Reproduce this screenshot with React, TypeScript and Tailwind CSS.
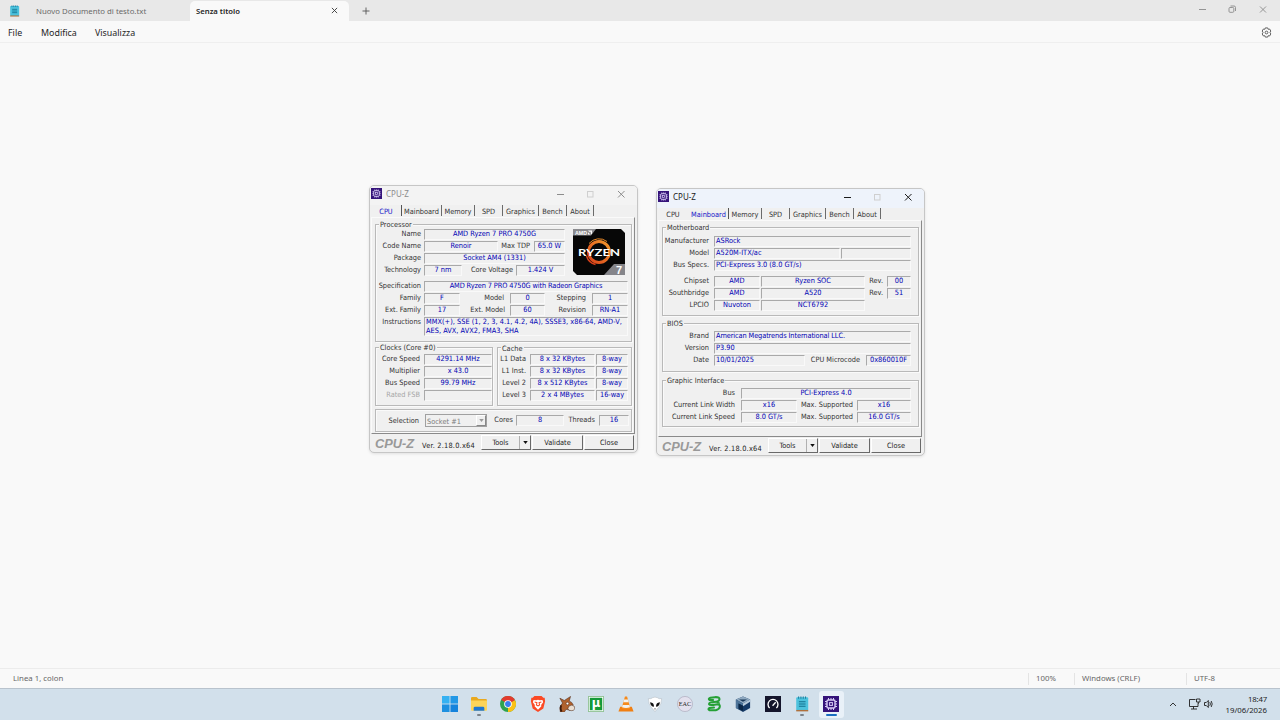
import React from 'react';

const Label: React.FC<{ w: string; children: React.ReactNode; dim?: boolean }> = ({ w, children, dim }) => (
  <span className={`shrink-0 text-right leading-[10px] ${w} ${dim ? 'text-[#a6a6a6]' : 'text-[#333]'}`}>{children}</span>
);

const Field: React.FC<{ className: string; children?: React.ReactNode; left?: boolean }> = ({ className, children, left }) => (
  <span
    className={`h-[11px] shrink-0 border-t border-l border-r border-b border-t-[#a9a9a9] border-l-[#a9a9a9] border-r-[#f9f9f9] border-b-[#f9f9f9] text-[#0000b4] leading-[8px] ${left ? 'text-left pl-px' : 'text-center'} ${className}`}
  >
    {children}
  </span>
);

const Row: React.FC<{ children: React.ReactNode; className?: string }> = ({ children, className = '' }) => (
  <div className={`flex h-3 items-start ${className}`}>{children}</div>
);

const Group: React.FC<{ title?: string; className: string; children: React.ReactNode }> = ({ title, className, children }) => (
  <div className={`shrink-0 border border-[#b9b9b9] shadow-[inset_1px_1px_0_#fafafa,1px_1px_0_#fafafa] ${className}`}>
    {title && <div className="-mt-[5px] ml-[3px] h-[10px] w-fit bg-[#f0f0f0] px-px leading-[9px] text-[#333]">{title}</div>}
    {children}
  </div>
);

const ChipIcon: React.FC<{ className: string }> = ({ className }) => (
  <svg viewBox="0 0 16 16" className={className}>
    <rect width="16" height="16" fill="#35137a" />
    <g stroke="#d9cdf5" strokeWidth="1" fill="none">
      <rect x="4" y="4" width="8" height="8" rx="1.2" strokeWidth="1.4" />
      <rect x="6.6" y="6.6" width="2.8" height="2.8" />
      <path d="M5.5 2v2M8 2v2M10.5 2v2M5.5 12v2M8 12v2M10.5 12v2M2 5.5h2M2 8h2M2 10.5h2M12 5.5h2M12 8h2M12 10.5h2" />
    </g>
  </svg>
);

const TABS = [
  { name: 'CPU', width: 'w-[31px]' },
  { name: 'Mainboard', width: 'w-[40px]' },
  { name: 'Memory', width: 'w-[33px]' },
  { name: 'SPD', width: 'w-[28px]' },
  { name: 'Graphics', width: 'w-[36px]' },
  { name: 'Bench', width: 'w-[28px]' },
  { name: 'About', width: 'w-[27px]' },
];

const CpuzWindow: React.FC<{ tab: string; focused?: boolean; className: string; children: React.ReactNode }> = ({
  tab,
  focused,
  className,
  children,
}) => (
  <div
    className={`absolute flex h-[268px] w-[269px] flex-col overflow-hidden rounded-[5px] border border-[#c6c6c6] bg-[#f0f0f0] font-['DejaVu_Sans_Condensed','DejaVu_Sans',sans-serif] text-[7.33px] whitespace-nowrap shadow-[0_1px_3px_rgba(0,0,0,0.1)] [font-stretch:condensed] ${className}`}
  >
    <div className={`flex h-[19px] shrink-0 items-center pl-px ${focused ? 'bg-[#eef3fb]' : 'bg-[#f3f3f3]'}`}>
      <ChipIcon className="mb-[5px] size-[11px]" />
      <span className={`mb-[4px] ml-[4px] w-[165px] font-['Noto_Sans',sans-serif] text-[8px] leading-[10px] ${focused ? 'text-[#1b1b1b]' : 'text-[#8c8c8c]'}`}>CPU-Z</span>
      <svg viewBox="0 0 78 10" className={`mb-[4px] ml-[3px] h-[10px] w-[78px] ${focused ? 'text-[#1b1b1b]' : 'text-[#8c8c8c]'}`} fill="none" stroke="currentColor" strokeWidth="1">
        <path d="M3 5.5h7" />
        <rect x="33.5" y="2.5" width="5.5" height="5.5" stroke="#cfcfcf" />
        <path d="M64 2l6.5 6.5M70.500 2L64 8.500" />
      </svg>
    </div>

    <div className="flex h-3 shrink-0 items-start pl-px">
      {TABS.map((t) => (
        <div
          key={t.name}
          className={`h-[11px] border-r text-center leading-[14px] ${t.width} ${
            t.name === tab ? 'border-r-[#555] text-[#1414c8]' : t.name === 'CPU' ? 'border-r-transparent text-[#333]' : 'border-r-[#6b6b6b] text-[#333]'
          }`}
        >
          {t.name}
        </div>
      ))}
    </div>

    <div className="mx-px flex h-[217px] w-[264px] shrink-0 flex-col border border-t-[#fafafa] border-r-[#8a8a8a] border-b-[#8a8a8a] border-l-[#fafafa] pt-[6px] pl-[3px]">
      {children}
    </div>

    <div className="flex h-[18px] items-start text-[#1b1b1b]">
      <span className="ml-[5px] w-[47px] pt-[2px] font-['Liberation_Sans',sans-serif] text-[12.8px] leading-[16px] font-bold text-[#999] italic [font-stretch:normal]">CPU-Z</span>
      <span className="w-[59px] pt-[7px] leading-[10px] tracking-[0.22px]">Ver. 2.18.0.x64</span>
      <div className="mt-px flex h-[15px] w-[50px] border border-t-white border-r-[#696969] border-b-[#696969] border-l-white">
        <span className="w-[37px] text-center leading-[14px]">Tools</span>
        <span className="flex flex-1 items-center justify-center border-l border-l-[#b0b0b0]">
          <svg viewBox="0 0 6 4" className="mb-px h-[3px] w-[5px]"><path d="M0 0h6L3 4z" fill="#111" /></svg>
        </span>
      </div>
      <div className="mt-px ml-px h-[15px] w-[51px] border border-t-white border-r-[#696969] border-b-[#696969] border-l-white text-center leading-[14px]">Validate</div>
      <div className="mt-px ml-px h-[15px] w-[50px] border border-t-white border-r-[#696969] border-b-[#696969] border-l-white text-center leading-[14px]">Close</div>
    </div>
  </div>
);

const RyzenLogo = () => (
  <svg viewBox="0 0 52 46" className="h-[46px] w-[52px]">
    <defs>
      <linearGradient id="ring" x1="0" y1="1" x2="1" y2="0">
        <stop offset="0" stopColor="#d8401a" />
        <stop offset="1" stopColor="#f39a2c" />
      </linearGradient>
    </defs>
    <path d="M0 0h48l4 4v42H4l-4-4z" fill="#070707" />
    <path d="M0 0h23l-5 6.500H0z" fill="#8b8b8f" />
    <path d="M41 35h11v11H31z" fill="#85858a" />
    <circle cx="26" cy="23" r="10.500" fill="none" stroke="url(#ring)" strokeWidth="3" />
    <path d="M16 14.500a13 13 0 0 1 18-2" fill="none" stroke="#ee8b27" strokeWidth="1" />
    <path d="M13.500 27a12.500 12.500 0 0 0 9 8.500" fill="none" stroke="#d8401a" strokeWidth="1.500" />
    <text x="2" y="5.600" fill="#fff" fontSize="5.500" fontWeight="700" fontFamily="Liberation Sans, sans-serif" textLength="12" lengthAdjust="spacingAndGlyphs">AMD</text>
    <path d="M15 1.600h4v4l-1.200-1.200V2.800h-1.600zM15 3.200v2.400h2.400l-1.100-1.100z" fill="#fff" />
    <text x="5" y="27" fill="#fff" fontSize="9.500" fontWeight="700" fontFamily="Lato, sans-serif" textLength="42" lengthAdjust="spacingAndGlyphs">RYZEN</text>
    <text x="43" y="44.500" fill="#fff" fontSize="11" fontWeight="700" fontFamily="Liberation Sans, sans-serif">7</text>
  </svg>
);

const CpuPage = () => (
  <>
    <Group title="Processor" className="h-[118px] w-[257px]">
      <div className="-mt-px flex">
        <div>
          <Row><Label w="w-[45px]">Name</Label><Field className="ml-[3px] w-[141px]">AMD Ryzen 7 PRO 4750G</Field></Row>
          <Row>
            <Label w="w-[45px]">Code Name</Label><Field className="ml-[3px] w-[74px]">Renoir</Field>
            <Label w="w-[32px]">Max TDP</Label><Field className="ml-[4px] w-[31px]">65.0 W</Field>
          </Row>
          <Row><Label w="w-[45px]">Package</Label><Field className="ml-[3px] w-[141px]">Socket AM4 (1331)</Field></Row>
          <Row className="mb-1">
            <Label w="w-[45px]">Technology</Label><Field className="ml-[3px] w-[38px]">7 nm</Field>
            <Label w="w-[51px]">Core Voltage</Label><Field className="ml-[3px] w-[49px]">1.424 V</Field>
          </Row>
        </div>
        <div className="ml-[8px]"><RyzenLogo /></div>
      </div>
      <Row><Label w="w-[45px]">Specification</Label><Field className="ml-[3px] w-[204px] tracking-[-0.12px]">AMD Ryzen 7 PRO 4750G with Radeon Graphics</Field></Row>
      <Row>
        <Label w="w-[45px]">Family</Label><Field className="ml-[3px] w-[36px]">F</Field>
        <Label w="w-[44px]">Model</Label><Field className="ml-[6px] w-[35px]">0</Field>
        <Label w="w-[41px]">Stepping</Label><Field className="ml-[6px] w-[36px]">1</Field>
      </Row>
      <Row>
        <Label w="w-[45px]">Ext. Family</Label><Field className="ml-[3px] w-[36px]">17</Field>
        <Label w="w-[45px]">Ext. Model</Label><Field className="ml-[5px] w-[35px]">60</Field>
        <Label w="w-[41px]">Revision</Label><Field className="ml-[6px] w-[36px]">RN-A1</Field>
      </Row>
      <div className="flex items-start">
        <Label w="w-[45px]">Instructions</Label>
        <div className="ml-[3px] h-[19px] w-[204px] border border-t-[#a9a9a9] border-r-[#f9f9f9] border-b-[#f9f9f9] border-l-[#a9a9a9] pl-px leading-[8.500px] tracking-[0.03px] text-[#0000b4]">
          MMX(+), SSE (1, 2, 3, 4.1, 4.2, 4A), SSSE3, x86-64, AMD-V,<br />AES, AVX, AVX2, FMA3, SHA
        </div>
      </div>
    </Group>

    <div className="mt-[5px] flex gap-[4px]">
      <Group title="Clocks (Core #0)" className="h-[59px] w-[118px]">
        <Row className="mt-px"><Label w="w-[44px]">Core Speed</Label><Field className="ml-[4px] w-[68px]">4291.14 MHz</Field></Row>
        <Row><Label w="w-[44px]">Multiplier</Label><Field className="ml-[4px] w-[68px]">x 43.0</Field></Row>
        <Row><Label w="w-[44px]">Bus Speed</Label><Field className="ml-[4px] w-[68px]">99.79 MHz</Field></Row>
        <Row><Label w="w-[44px]" dim>Rated FSB</Label><Field className="ml-[4px] w-[68px]" /></Row>
      </Group>
      <Group title="Cache" className="h-[59px] w-[135px] pt-px">
        {[
          ['L1 Data', '8 x 32 KBytes', '8-way'],
          ['L1 Inst.', '8 x 32 KBytes', '8-way'],
          ['Level 2', '8 x 512 KBytes', '8-way'],
          ['Level 3', '2 x 4 MBytes', '16-way'],
        ].map(([name, size, way]) => (
          <Row key={name}>
            <Label w="w-[28px]">{name}</Label>
            <Field className="ml-[4px] w-[65px]">{size}</Field>
            <Field className="ml-px w-[32px]">{way}</Field>
          </Row>
        ))}
      </Group>
    </div>

    <Group className="mt-[3px] flex h-[23px] w-[257px] items-start pt-[5px]">
      <Label w="w-[43px]"><span className="leading-[12px]">Selection</span></Label>
      <div className="-mt-px ml-[6px] flex h-[13px] w-[62px] justify-between border border-[#a0a0a0] pl-px leading-[13px] text-[#7c7c7c]">
        Socket #1
        <span className="flex w-[10px] items-center justify-center border-t border-r border-b border-l border-t-white border-r-[#888] border-b-[#888] border-l-white">
          <svg viewBox="0 0 6 4" className="h-[3px] w-[5px]"><path d="M0 0h6L3 4z" fill="#999" /></svg>
        </span>
      </div>
      <Label w="w-[26px]">Cores</Label><Field className="ml-[3px] w-[48px]">8</Field>
      <Label w="w-[31px]">Threads</Label><Field className="ml-[4px] w-[30px]">16</Field>
    </Group>
  </>
);

const MainboardPage = () => (
  <>
    <Group title="Motherboard" className="h-[89px] w-[257px]">
      <Row className="mt-[3px]"><Label w="w-[46px]">Manufacturer</Label><Field left className="ml-[5px] w-[197px]">ASRock</Field></Row>
      <Row>
        <Label w="w-[46px]">Model</Label><Field left className="ml-[5px] w-[126px]">A520M-ITX/ac</Field>
        <Field className="ml-px w-[70px]" />
      </Row>
      <Row className="mb-1"><Label w="w-[46px]">Bus Specs.</Label><Field left className="ml-[5px] w-[197px]">PCI-Express 3.0 (8.0 GT/s)</Field></Row>
      {[
        ['Chipset', 'AMD', 'Ryzen SOC', '00'],
        ['Southbridge', 'AMD', 'A520', '51'],
        ['LPCIO', 'Nuvoton', 'NCT6792', ''],
      ].map(([name, vendor, model, rev]) => (
        <Row key={name}>
          <Label w="w-[46px]">{name}</Label>
          <Field className="ml-[5px] w-[46px]">{vendor}</Field>
          <Field className="ml-px w-[104px]">{model}</Field>
          {rev && (
            <>
              <Label w="w-[18px]">Rev.</Label>
              <Field className="ml-[4px] w-[24px]">{rev}</Field>
            </>
          )}
        </Row>
      ))}
    </Group>

    <Group title="BIOS" className="mt-[7px] h-[49px] w-[257px]">
      <Row className="mt-[2px]"><Label w="w-[46px]">Brand</Label><Field left className="ml-[5px] w-[197px] tracking-[-0.1px]">American Megatrends International LLC.</Field></Row>
      <Row><Label w="w-[46px]">Version</Label><Field left className="ml-[5px] w-[197px]">P3.90</Field></Row>
      <Row>
        <Label w="w-[46px]">Date</Label><Field left className="ml-[5px] w-[91px]">10/01/2025</Field>
        <Label w="w-[55px]">CPU Microcode</Label><Field className="ml-[6px] w-[45px]">0x860010F</Field>
      </Row>
    </Group>

    <Group title="Graphic Interface" className="mt-[8px] h-[47px] w-[257px]">
      <Row className="mt-[2px]"><Label w="w-[72px]">Bus</Label><Field className="ml-[6px] w-[170px]">PCI-Express 4.0</Field></Row>
      <Row>
        <Label w="w-[72px]">Current Link Width</Label><Field className="ml-[6px] w-[56px]">x16</Field>
        <Label w="w-[56px]">Max. Supported</Label><Field className="ml-[4px] w-[54px]">x16</Field>
      </Row>
      <Row>
        <Label w="w-[72px]">Current Link Speed</Label><Field className="ml-[6px] w-[56px]">8.0 GT/s</Field>
        <Label w="w-[56px]">Max. Supported</Label><Field className="ml-[4px] w-[54px]">16.0 GT/s</Field>
      </Row>
    </Group>
  </>
);

const NotepadIcon: React.FC<{ className: string }> = ({ className }) => (
  <svg viewBox="0 0 16 18" className={className}>
    <rect x="1.500" y="1.500" width="13.500" height="15" rx="1" fill="#4cc2dd" />
    <path d="M1.500 15.700H15v1.600H1.500z" fill="#b0703c" />
    <path d="M4.200.500v2.600M6.800.500v2.600M9.400.500v2.600M12 .500v2.600" stroke="#157a9c" strokeWidth="1.100" />
    <path d="M4.500 6.500h7.500M4.500 9h7.500M4.500 11.500h7.500" stroke="#12718f" strokeWidth="1.200" />
  </svg>
);

const ICONS: { id: string; mark?: string; active?: boolean; art: React.ReactNode }[] = [
  {
    id: 'start',
    art: (
      <g fill="#1583dc">
        <rect width="8.500" height="8.500" fill="#35b1f2" /><rect x="9.500" width="8.500" height="8.500" fill="#2298e6" />
        <rect y="9.500" width="8.500" height="8.500" fill="#1d90e0" /><rect x="9.500" y="9.500" width="8.500" height="8.500" />
      </g>
    ),
  },
  {
    id: 'explorer',
    mark: 'w-[4px] bg-[#7b838b]',
    art: (
      <g>
        <path d="M0 2.500Q0 1.200 1.300 1.200h5L8.500 3.500h8Q18 3.500 18 5v9H0z" fill="#e9a91f" />
        <path d="M0 5h18v10.500q0 1-1 1H1q-1 0-1-1z" fill="#fdd45a" />
        <path d="M3 16.500v-3q0-1.500 1.500-1.500h9q1.500 0 1.500 1.500v3z" fill="#1f77d2" />
      </g>
    ),
  },
  {
    id: 'chrome',
    art: (
      <g>
        <circle cx="9" cy="9" r="9" fill="#2fa34f" />
        <path d="M9 9L1.200 4.500A9 9 0 0 1 16.800 4.500z" fill="#e33b2e" />
        <path d="M9 9l7.800-4.500A9 9 0 0 1 9 18z" fill="#fbc116" />
        <path d="M9 4.500h7.800L9 9z" fill="#e33b2e" />
        <path d="M5 11.200L1.200 4.500 9 9z" fill="#2fa34f" />
        <circle cx="9" cy="9" r="4.300" fill="#fff" /><circle cx="9" cy="9" r="3.300" fill="#3b7ded" />
      </g>
    ),
  },
  {
    id: 'brave',
    art: (
      <g>
        <path d="M5 0h8l2 2h1.500l.500 4-2 8-6 4-6-4-2-8 .500-4H3z" fill="#fb4a25" />
        <path d="M4 4.500l3 .400 2-.600 2 .600 3-.400.800 2.500-2.300 3 .300 1.500L9 15.500 5.200 11.500l.300-1.500-2.300-3z" fill="#fff" />
        <path d="M5.200 6.800l2.600.700-.600 2.500L9 11.200l1.800-1.200-.600-2.500 2.600-.700" stroke="#fb4a25" strokeWidth="1.200" fill="none" />
      </g>
    ),
  },
  {
    id: 'mule',
    art: (
      <g stroke="#4a2210" strokeWidth=".6">
        <path d="M1.500 18Q-.500 12 4 8L1 2.500l5 2.500L13 .500l-1.500 5Q15 7 16 10l-4 6-4-1-2 3z" fill="#b0622e" />
        <path d="M11 11.500q4-3 6.500.500 1 4-3 4.500-4 .500-4.500-2.500z" fill="#eadfd2" />
        <circle cx="9.500" cy="8.500" r="1.500" fill="#fff" /><path d="M2.500 10.500q-1.500 4 .5 7" stroke="#3a1a0d" strokeWidth="2" fill="none" />
      </g>
    ),
  },
  {
    id: 'utorrent',
    art: (
      <g>
        <rect x=".5" y=".5" width="17" height="17" fill="#fff" stroke="#8fc193" />
        <rect x="2" y="2" width="14" height="14" fill="#159a38" />
        <text x="9" y="12.500" textAnchor="middle" fontSize="13" fontWeight="700" fontFamily="DejaVu Sans, sans-serif" fill="#fff">µ</text>
      </g>
    ),
  },
  {
    id: 'vlc',
    art: (
      <g>
        <path d="M2.500 12h13l2 5.500h-17z" fill="#f07f13" />
        <path d="M7.800.500h2.400L14 14q-5 2-10 0z" fill="#f58a1c" />
        <path d="M6.900 4h4.200l.900 3H6zM5.200 10h7.600l.700 2.700q-4.500 1.500-9 0z" fill="#f4f2ee" />
      </g>
    ),
  },
  {
    id: 'foobar',
    art: (
      <g>
        <path d="M1.500 3Q5 3.500 6 2q3-1.500 6 0 1 1.500 4.500 1 0 6-3.500 10l-4 4.500L5 13Q1.500 9 1.500 3z" fill="#fff" stroke="#aeb7bf" strokeWidth=".6" />
        <path d="M3.500 7Q8.200 7.500 7.800 12 4 12 3.500 7zM14.500 7Q9.800 7.500 10.200 12q3.800 0 4.300-5z" fill="#111" />
        <path d="M8 14.500h2" stroke="#333" strokeWidth=".7" />
      </g>
    ),
  },
  {
    id: 'eac',
    art: (
      <g>
        <circle cx="9" cy="9" r="8.500" fill="#e3e1ee" stroke="#a9a5b8" strokeWidth=".7" />
        <text x="9" y="11.800" textAnchor="middle" fontSize="8" fontFamily="Liberation Serif, serif" fill="#222" textLength="14" lengthAdjust="spacingAndGlyphs">EAC</text>
      </g>
    ),
  },
  {
    id: 'snake',
    art: (
      <g fill="none" stroke="#25a035" strokeWidth="2.300" strokeLinecap="round" strokeLinejoin="round">
        <path d="M8 4.500H4Q2 3 5 2l5-.700q6-.300 5 3Q14.500 6.500 9 6.700q-6 .300-5.500 2.600Q4 10.500 8 10" />
        <path d="M8 10l5-.700q3 .200 2.500 3T11 16H4q-2.500-1 0-2.500l5-.500" />
        <path d="M12.500 7l2.500 1" strokeWidth="1.600" />
      </g>
    ),
  },
  {
    id: 'vbox',
    art: (
      <g>
        <path d="M9 .500L17 4v9.500L9 18l-8-4.500V4z" fill="#153a66" />
        <path d="M9 .500L17 4 9 8.500 1 4z" fill="#8fa9c0" />
        <path d="M4.500 3.800h9L9 6.500z" fill="#163657" />
        <path d="M1 4l8 4.500V11L4 8.500v6.700l-3-1.700z" fill="#4d7499" />
        <path d="M4 8.500l5 2.500v6L4 14z" fill="#0a2747" />
        <path d="M9 8.500L17 4v2.500l-8 5z" fill="#b8cbdb" />
      </g>
    ),
  },
  {
    id: 'speedtest',
    art: (
      <g>
        <rect width="18" height="18" fill="#14152b" />
        <path d="M5.200 13.500a5.600 5.600 0 1 1 7.600 0" fill="none" stroke="#fff" strokeWidth="1.500" />
        <path d="M8.500 11l3.500-4" stroke="#fff" strokeWidth="1.400" />
      </g>
    ),
  },
  { id: 'notepad', mark: 'w-[4px] bg-[#7b838b]', art: <NotepadIcon className="" /> },
  { id: 'cpuz', mark: 'w-[11px] bg-[#1a6cc0]', active: true, art: <ChipIcon className="" /> },
];

const Taskbar = () => (
  <div className="flex h-8 shrink-0 border-t border-[#b9c3cd] bg-[#d2e0eb]">
    <div className="ml-[435px] flex w-[411px]">
      {ICONS.map((icon) => (
        <div key={icon.id} className="flex w-0 flex-1 justify-center pt-[2px]">
          <div className={`flex h-[27px] w-[25px] flex-col items-center rounded-[3px] pt-[5px] ${icon.active ? 'bg-[#e9f1f8]' : ''}`}>
            <svg viewBox="0 0 18 18" className="size-4 shrink-0">{icon.art}</svg>
            {icon.mark && <span className={`mt-[2px] h-[2px] rounded-full ${icon.mark}`} />}
          </div>
        </div>
      ))}
    </div>
    <div className="ml-auto flex items-center pr-[13px] text-[#1f1f1f]">
      <svg viewBox="0 0 44 12" className="mr-[12px] mb-px h-3 w-[46px]" fill="none" stroke="currentColor" strokeWidth=".9">
        <path d="M1 8l3-3 3 3" />
        <path d="M26.500 1.500h-6v7h8.500v-3M22 11h6M24.500 8.500V11" />
        <path d="M27.500 1h3.500v3h-3.500zM29.300 4v2" />
        <path d="M35.500 4.500h1.800l2-2v7l-2-2h-1.800zM40.800 4.200q1.200 1.800 0 3.600M42.200 3q2 3 0 6" />
      </svg>
      <div className="text-right text-[7.8px] leading-[10.500px]">
        <div className="tracking-[-0.2px]">18:47</div>
        <div>19/06/2026</div>
      </div>
    </div>
  </div>
);

const App: React.FC = () => (
  <div className="relative flex h-[720px] w-[1280px] flex-col overflow-hidden bg-[#f9f9f9] font-['Noto_Sans','Open_Sans',sans-serif] text-[8px] text-[#1f1f1f]">
    <div className="flex h-[21px] shrink-0 bg-[#e8e8e8]">
      <NotepadIcon className="mt-[5px] ml-[9px] h-[12px] w-[11px]" />
      <span className="ml-[16px] w-[154px] text-[7.8px] text-[#6a6a6a] leading-[23px]">Nuovo Documento di testo.txt</span>
      <div className="mt-px flex w-[159px] items-center justify-between rounded-t-[5px] bg-[#f9f9f9] pr-[11px] pl-[6px]">
        <span className="pt-px text-[7.7px] font-semibold">Senza titolo</span>
        <svg viewBox="0 0 8 8" className="mb-px size-[7px]" stroke="#333" strokeWidth="1"><path d="M1 1l6 6M7 1L1 7" /></svg>
      </div>
      <svg viewBox="0 0 8 8" className="mt-[7px] ml-[13px] size-2" stroke="#555" strokeWidth=".9"><path d="M4 .500v7M.500 4h7" /></svg>
      <svg viewBox="0 0 72 10" className="mt-[4px] mr-[10px] ml-auto h-[10px] w-[72px]" fill="none" stroke="#8a8a8a" strokeWidth=".9">
        <path d="M1 5.500h7" />
        <rect x="31" y="3.500" width="4.800" height="4.800" rx="1" />
        <path d="M32.500 2h3.500q1.500 0 1.500 1.500v3.500" />
        <path d="M62 2.500l6 6M68 2.500l-6 6" />
      </svg>
    </div>

    <div className="flex h-[22px] shrink-0 items-center border-b border-[#efefef] px-2 pt-[2px] text-[8.900px] text-[#262626]">
      <span className="w-[33px]">File</span>
      <span className="w-[54px]">Modifica</span>
      <span>Visualizza</span>
      <svg viewBox="0 0 12 12" className="ml-auto size-[11px]" fill="none" stroke="#555" strokeWidth="1">
        <path d="M4.700 1h2.600l.500 1.500 1.600-.300 1.300 2.200L9.800 6l.900 1.600-1.300 2.200-1.600-.300-.500 1.500H4.700l-.500-1.500-1.600.300-1.300-2.200L2.200 6l-.900-1.600 1.300-2.200 1.600.300z" />
        <circle cx="6" cy="6" r="1.500" />
      </svg>
    </div>

    <div className="grow">
      <CpuzWindow tab="CPU" className="top-[185px] left-[369px]"><CpuPage /></CpuzWindow>
      <CpuzWindow tab="Mainboard" focused className="top-[188px] left-[656px]"><MainboardPage /></CpuzWindow>
    </div>

    <div className="flex h-5 shrink-0 items-center border-t border-[#ececec] pt-px pl-[13px] text-[7.8px] text-[#666]">
      <span className="mr-auto">Linea 1, colon</span>
      <span className="w-[46px] border-l border-[#e4e4e4] pl-[7px]">100%</span>
      <span className="w-[112px] border-l border-[#e4e4e4] pl-[7px]">Windows (CRLF)</span>
      <span className="w-[94px] border-l border-[#e4e4e4] pl-[7px]">UTF-8</span>
    </div>

    <Taskbar />
  </div>
);

export default App;
